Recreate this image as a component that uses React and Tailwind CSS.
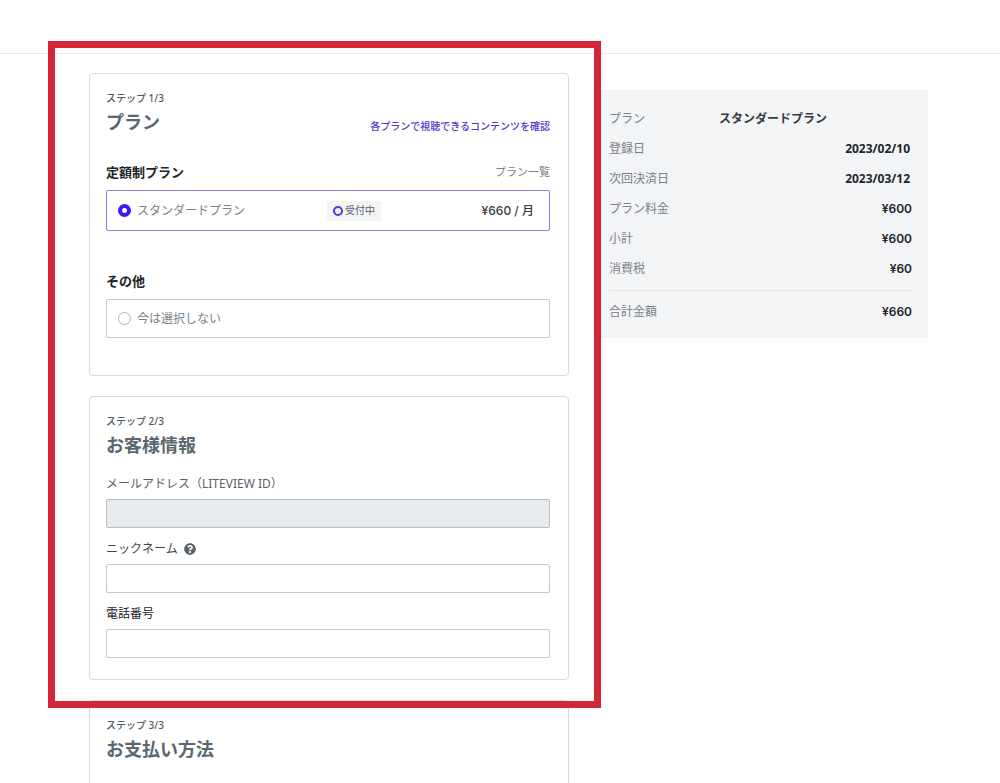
import { FaQuestionCircle } from "react-icons/fa";

const summary = [
  { label: "登録日", value: "2023/02/10" },
  { label: "次回決済日", value: "2023/03/12" },
  { label: "プラン料金", value: "¥600", price: true },
  { label: "小計", value: "¥600", price: true },
  { label: "消費税", value: "¥60", price: true },
];

const dateFont = "font-['Noto_Sans','Noto_Sans_CJK_JP',sans-serif]";
const priceFont = "font-['Inter','Noto_Sans_CJK_JP',sans-serif]";

function StepHeading({ step, title }) {
  return (
    <div>
      <p className="text-[10px] leading-4 font-medium text-[#4f5b63]">ステップ {step}/3</p>
      <h2 className="mt-1 text-[18px] leading-6 font-bold text-[#5a676f]">{title}</h2>
    </div>
  );
}

function Card({ className, children }) {
  return (
    <section className={`border border-[#d5dadc] pt-4 pr-[18px] pl-4 ${className}`}>{children}</section>
  );
}

function PlanStep() {
  return (
    <Card className="rounded pb-[37px]">
      <div className="flex items-end justify-between">
        <StepHeading step={1} title="プラン" />
        <a href="#contents" className="text-[10px] leading-4 font-medium text-[#5535cf]">
          各プランで視聴できるコンテンツを確認
        </a>
      </div>

      <div className="mt-7 flex items-center justify-between">
        <h3 className="text-[13px] leading-5 font-bold text-[#212529]">定額制プラン</h3>
        <a href="#plans" className="text-[11px] leading-5 text-[#78828a]">プラン一覧</a>
      </div>
      <label className="mt-2 flex h-[41px] items-center rounded-xs border border-[#937bdc] pr-[15px] pl-[11px]">
        <input
          type="radio"
          name="plan"
          defaultChecked
          className="size-[13px] shrink-0 appearance-none rounded-full border border-[#adb5bd] checked:border-4 checked:border-[#3c18f5]"
        />
        <span className="ml-1.5 flex-1 text-[12px] text-[#78828a]">スタンダードプラン</span>
        <span className="flex h-5 items-center gap-0.5 rounded-xs bg-[#f3f4f6] px-1.5 text-[10px] text-[#56616a]">
          <span className="size-[10px] rounded-full border-2 border-[#5535dd]" />
          受付中
        </span>
        <span className={`w-[153px] text-right text-[12px] font-medium text-[#343a40] ${priceFont}`}>
          ¥660 / 月
        </span>
      </label>

      <h3 className="mt-10 text-[13px] leading-5 font-bold text-[#212529]">その他</h3>
      <label className="mt-2 flex h-[39px] items-center rounded-xs border border-[#c3c9cd] pr-[15px] pl-[11px]">
        <input
          type="radio"
          name="plan"
          className="size-[13px] shrink-0 appearance-none rounded-full border border-[#adb5bd] checked:border-4 checked:border-[#3c18f5]"
        />
        <span className="ml-1.5 text-[12px] text-[#78828a]">今は選択しない</span>
      </label>
    </Card>
  );
}

function Field({ id, label, type, help, disabled, className, labelColor }) {
  return (
    <div className={className}>
      <div className={`flex items-center gap-1.5 text-[12px] leading-[18px] ${labelColor}`}>
        <label htmlFor={id}>{label}</label>
        {help && <FaQuestionCircle className="size-3 text-[#56616a]" />}
      </div>
      <input
        id={id}
        type={type}
        disabled={disabled}
        className="mt-1.5 block h-[29px] w-full rounded-xs border border-[#c3c9cd] px-2 text-[12px] disabled:border-[#b9c0c5] disabled:bg-[#e7ebee]"
      />
    </div>
  );
}

function CustomerStep() {
  return (
    <Card className="mt-5 rounded pb-[21px]">
      <StepHeading step={2} title="お客様情報" />
      <Field id="email" type="email" label="メールアドレス（LITEVIEW ID）" disabled className="mt-[18px]" labelColor="text-[#56616a]" />
      <Field id="nickname" type="text" label="ニックネーム" help className="mt-3" labelColor="text-[#40484f]" />
      <Field id="phone" type="tel" label="電話番号" className="mt-3" labelColor="text-[#212529]" />
    </Card>
  );
}

function SummaryRow({ label, value, price }) {
  return (
    <div className="flex h-[30px] items-center justify-between">
      <dt className="text-[#78828a]">{label}</dt>
      <dd className={`text-[#212529] ${price ? `font-semibold ${priceFont}` : `pr-0.5 font-bold ${dateFont}`}`}>{value}</dd>
    </div>
  );
}

function Summary() {
  return (
    <aside className="mt-[17px] min-w-0 self-start bg-[#f3f4f6] px-4 pt-3.5 pb-[11px] text-[12px]">
      <dl>
        <div className="flex h-[30px] items-center">
          <dt className="w-[110px] text-[#78828a]">プラン</dt>
          <dd className="font-bold text-[#343a40]">スタンダードプラン</dd>
        </div>
        {summary.map((row) => (
          <SummaryRow key={row.label} {...row} />
        ))}
      </dl>
      <dl className="mt-1.5 border-t border-[#e1e4e7] pt-1.5">
        <SummaryRow label="合計金額" value="¥660" price />
      </dl>
    </aside>
  );
}

export default function App() {
  return (
    <div className="flex min-h-screen flex-col bg-white font-['Noto_Sans','Noto_Sans_CJK_JP',sans-serif]">
      <header className="h-[54px] border-b border-[#e9eaeb]" />
      <main className="grid flex-1 grid-cols-[480fr_335fr] gap-6 pt-[19px] pr-[72px] pl-[89px]">
        <div className="flex min-w-0 flex-col">
          <div className="relative">
            <PlanStep />
            <CustomerStep />
            <div className="pointer-events-none absolute -top-8 -right-8 -bottom-7 -left-[41px] z-10 border-[7px] border-[#d32735]" />
          </div>
          <Card className="mt-5 flex-1 rounded-t border-b-0">
            <StepHeading step={3} title="お支払い方法" />
          </Card>
        </div>
        <Summary />
      </main>
    </div>
  );
}
